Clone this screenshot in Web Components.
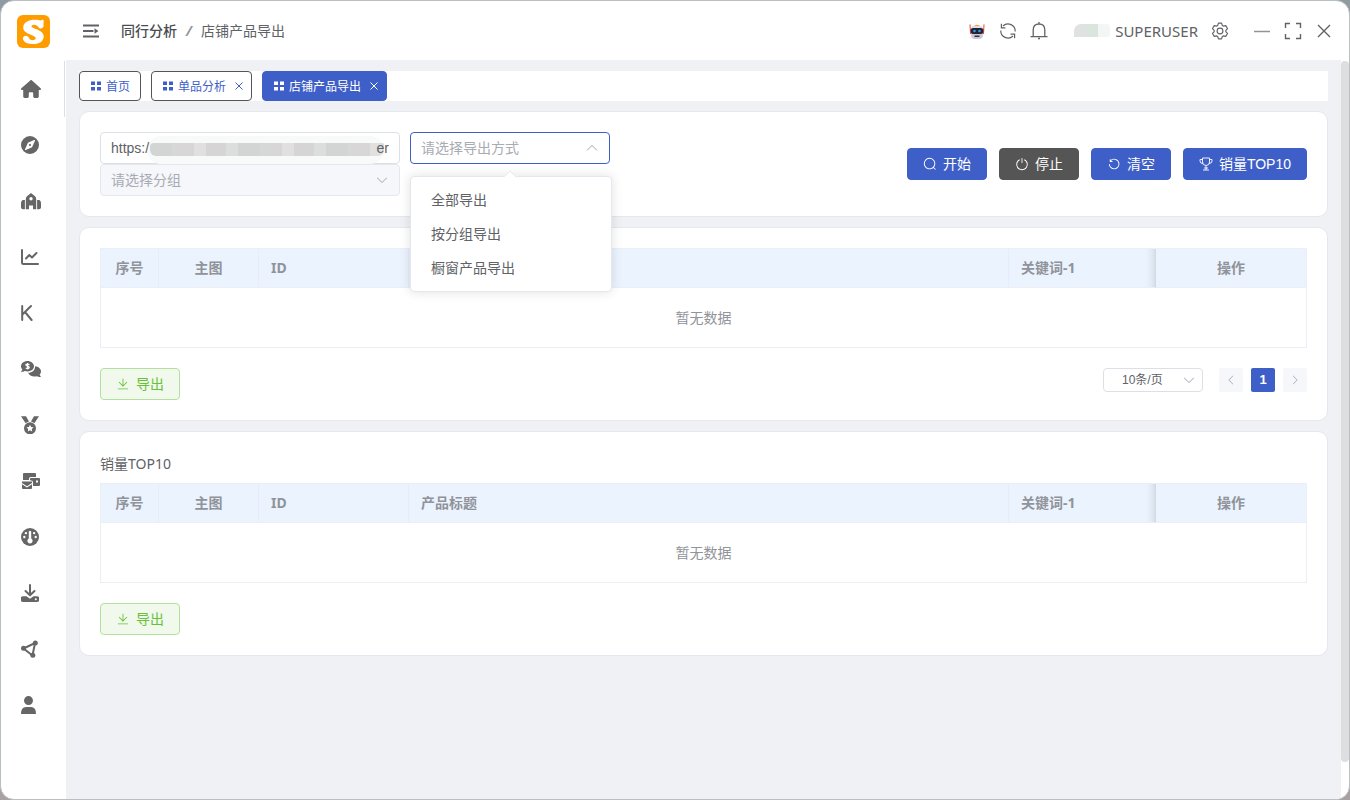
<!DOCTYPE html>
<html lang="zh-CN">
<head>
<meta charset="utf-8">
<title>店铺产品导出</title>
<style>
  html { height: 100%; }
  body {
    margin: 0;
    height: 100%;
    background: linear-gradient(#909ba1, #a9a0a4);
    font-family: "Noto Sans", "Noto Sans CJK SC", sans-serif;
    font-size: 14px;
    line-height: 20px;
    color: #606266;
    --primary: #3f5fc8;
    --line: #e4e7ed;
    --muted: #a8abb2;
    --control: "Liberation Sans", "Noto Sans CJK SC", sans-serif;
  }
</style>
</head>
<body>
<app-window>
  <side-nav slot="side"></side-nav>
  <top-bar slot="top"></top-bar>
  <tab-strip>
    <tab-item>首页</tab-item>
    <tab-item closable>单品分析</tab-item>
    <tab-item closable active>店铺产品导出</tab-item>
  </tab-strip>
  <panel-card>
    <export-form></export-form>
  </panel-card>
  <panel-card>
    <data-table label="产品列表"></data-table>
    <card-footer>
      <ui-button kind="success" icon="download">导出</ui-button>
      <page-pager slot="end"></page-pager>
    </card-footer>
  </panel-card>
  <panel-card>
    <card-title>销量TOP10</card-title>
    <data-table label="销量TOP10" name-column="产品标题"></data-table>
    <card-footer>
      <ui-button kind="success" icon="download">导出</ui-button>
    </card-footer>
  </panel-card>
</app-window>

<script>
const ICONS = {
  home: ['0 0 576 512', '<path d="M575.8 255.5c0 18-15 32.1-32 32.1h-32l.7 160.2c0 2.7-.2 5.4-.5 8.1V472c0 22.1-17.9 40-40 40H392c-22.100 0-40-17.900-40-40V384c0-17.700-14.300-32-32-32H256c-17.700 0-32 14.300-32 32v88c0 22.100-17.900 40-40 40H104c-22.100 0-40-17.900-40-40V287.600H32c-18 0-32-14-32-32.100c0-9 3-17 10-24L266.400 8c7-7 15-8 22-8s15 2 21 7L564.800 231.500c8 7 12 15 11 24z"/>'],
  compass: ['0 0 18 18', '<path fill-rule="evenodd" d="M9 0a9 9 0 1 0 0 18A9 9 0 0 0 9 0zM13.200 4Q14.300 3.700 14 4.800L11.400 10.600Q11.200 11.200 10.600 11.400L4.800 14Q3.700 14.300 4 13.200L6.600 7.400Q6.800 6.800 7.400 6.600zM9 7.900a1.100 1.100 0 1 0 0 2.200 1.100 1.100 0 0 0 0-2.200z"/>'],
  house: ['0 0 20 18', '<path fill-rule="evenodd" d="M10 1 14 4.300Q15.200 5.300 15.200 7V17.300H12V13.500H8V17.300H4.800V7Q4.800 5.300 6 4.300zM10 5a1.700 1.700 0 1 0 0 3.400 1.700 1.700 0 0 0 0-3.400z"/><path d="M3.900 8V17.300H2.100Q0 17.300 0 15.500V11Q0 9 1.600 8zM16.100 8H18.400Q20 9 20 11V15.500Q20 17.300 17.900 17.300H16.100z"/>'],
  chart: ['0 0 18 18', '<path fill="none" stroke="currentColor" stroke-width="2" stroke-linecap="round" stroke-linejoin="round" d="M1 2V14.500Q1 16 2.500 16H17M5 10.500 8.300 7 11 9.500 15.500 5"/>'],
  letterk: ['0 0 12 18', '<path fill="none" stroke="currentColor" stroke-width="2" stroke-linecap="round" stroke-linejoin="round" d="M1.200 2V16M10 2 1.200 10.700M4 8 10.600 16"/>'],
  comments: ['0 0 20 18', '<path d="M6.500 1C2.900 1 0 3.400 0 6.300c0 1.300.5 2.400 1.400 3.300L0 12c1.700 0 3-.4 4-.9.800.3 1.600.4 2.500.4 3.600 0 6.500-2.400 6.500-5.200S10.100 1 6.500 1z"/><path d="M14 6.200c.5 3.700-3 6.700-7 6.600 1 2.300 3.500 3.800 6.500 3.800.9 0 1.700-.1 2.500-.4 1 .5 2.300.9 4 .9l-1.400-2.400c.9-.9 1.400-2.100 1.400-3.400C20 8.600 17.500 6.500 14 6.200z"/><path fill="none" stroke="#fff" stroke-width="1.200" d="M8.400 4.600Q6.500 3.600 5 4.400 4.400 5.600 6.600 6.200 9 6.900 8 8.100 6.700 9 4.700 8M6.600 3V9.500"/>'],
  medal: ['0 0 18 18', '<path d="M0 .3H5L8 5.600Q6 6 4.600 7.300zM18 .3H13L10 5.600Q12 6 13.400 7.300z"/><path fill-rule="evenodd" d="M9 6.300a6 6 0 1 0 0 12 6 6 0 0 0 0-12zM9 8.700l1.100 2.300 2.500.3-1.800 1.700.4 2.500L9 14.300l-2.200 1.200.4-2.500-1.800-1.700 2.500-.3z"/>'],
  mail: ['0 0 20 18', '<path d="M3 1H14Q15 1 15 2V5H9.500Q8 5 8 7V8H2V2Q2 1 3 1z"/><path fill-rule="evenodd" d="M10 6H18Q19 6 19 7V13Q19 14 18 14H12V10Q12 8.500 9 8.300V7Q9 6 10 6zM15 8.500V10.500H17V8.500z"/><path d="M1 9.500H11V11L6 14.300 1 11zM1 12.300 6 15.600 11 12.300V16Q11 17 10 17H2Q1 17 1 16z"/>'],
  gauge: ['0 0 18 18', '<circle cx="9" cy="9" r="9"/><g fill="#fff"><path d="M7.800 3.500Q9 1.800 10.200 3.500V10.500a2.600 2.600 0 1 1-2.400 0z"/><circle cx="4.900" cy="5.100" r="1.200"/><circle cx="3.300" cy="9" r="1.200"/><circle cx="13.100" cy="5.100" r="1.200"/><circle cx="14.700" cy="9" r="1.200"/></g>'],
  inbox: ['0 0 18 18', '<path fill="none" stroke="currentColor" stroke-width="2" stroke-linecap="round" stroke-linejoin="round" d="M9 1V10.500M4.500 7 9 11.300 13.500 7"/><path fill-rule="evenodd" d="M2.200 12.200H5.500L9 14.800 12.500 12.200H15.800A2.600 2.600 0 0 1 15.800 18H2.200A2.600 2.600 0 0 1 2.200 12.200zM14.800 14.200a1 1 0 1 0 0 2 1 1 0 0 0 0-2z"/>'],
  nodes: ['0 0 18 18', '<path fill="none" stroke="currentColor" stroke-width="2" d="M2.500 8.500 14 3 11.500 15.500z"/><circle cx="2.500" cy="8.300" r="2.500"/><circle cx="14.300" cy="3" r="2.500"/><circle cx="11.800" cy="15.300" r="2.500"/>'],
  user: ['0 0 16 18', '<circle cx="7.500" cy="4.600" r="4.500"/><path d="M0 18Q0 11 5 11H10Q15 11 15 18z"/>'],
  fold: ['0 0 16 14', '<path d="M0 .5H16V2.500H0zM0 6H10.500V8H0zM0 11.500H16V13.500H0zM11.500 4.300 15.500 7 11.500 9.700z"/>'],
  robot: ['0 0 18 18', '<path fill="#f5a623" d="M6 4Q9 1.500 12 4z"/><path fill="#e8453c" d="M1.500 2.500H2.600V6.500H4V12H2zM16.500 2.500H15.400V6.500H14V12H16z"/><rect x="3" y="4" width="12" height="13" rx="4" fill="#cfc6dc"/><path fill="#e2dcea" d="M5 4H13L14 7H4z"/><rect x="2.800" y="6" width="12.400" height="6" rx="2.500" fill="#1f2430"/><circle cx="6.500" cy="9" r="1.300" fill="#26a0e8"/><circle cx="11.500" cy="9" r="1.300" fill="#26a0e8"/><rect x="6.500" y="13.500" width="5" height="1.500" fill="#33313a"/>'],
  refresh: ['0 0 18 18', '<g fill="none" stroke="currentColor" stroke-width="1.200"><path d="M4 4A7.200 7.200 0 0 1 16.200 9.500M14 14A7.200 7.200 0 0 1 1.800 8.500M2.400 1.800V5.800H6.400M15.600 16.200V12.200H11.600"/></g>'],
  bell: ['0 0 18 18', '<g fill="none" stroke="currentColor" stroke-width="1.300"><path d="M9 0V2M3.200 14.500V8Q3.200 2 9 2T14.800 8V14.500M.5 14.700H17.500M8 16.500H10"/></g>'],
  gear: ['0 0 1024 1024', '<g fill="none" stroke="currentColor" stroke-width="64"><path d="M600.704 64 645 200 700 232 840 205 938 375 842 480V544L938 649 840 819 700 792 645 824 600 960H424L379 824 324 792 184 819 86 649 182 544V480L86 375 184 205 324 232 379 200 424 64z" stroke-linejoin="round"/><circle cx="512" cy="512" r="165"/></g>'],
  minus: ['0 0 16 16', '<path fill="none" stroke="currentColor" stroke-width="1.300" d="M0 8.500H16"/>'],
  expand: ['0 0 18 18', '<path fill="none" stroke="currentColor" stroke-width="1.400" d="M1.500 6V1.500H6M12 1.500H16.500V6M16.500 12V16.500H12M6 16.500H1.500V12"/>'],
  cross: ['0 0 16 16', '<path fill="none" stroke="currentColor" stroke-width="1.400" d="M2 2 14 14M14 2 2 14"/>'],
  close: ['0 0 10 10', '<path fill="none" stroke="currentColor" d="M1.500 1.500 8.500 8.500M8.500 1.500 1.500 8.500"/>'],
  menu: ['0 0 12 12', '<path d="M1 1.500H5V5H1zM7 1.500H11V5H7zM1 7H5V10.500H1zM7 7H11V10.500H7z"/>'],
  down: ['0 0 1024 1024', '<path d="M831.872 340.864 512 652.672 192.128 340.864a30.592 30.592 0 0 0-42.752 0 29.120 29.120 0 0 0 0 41.600L489.664 714.240a32 32 0 0 0 44.672 0l340.288-331.712a29.120 29.120 0 0 0 0-41.728 30.592 30.592 0 0 0-42.752 0z"/>'],
  search: ['0 0 1024 1024', '<path d="m795.904 750.720 124.992 124.928a32 32 0 0 1-45.248 45.248L750.656 795.904a416 416 0 1 1 45.248-45.248zM480 832a352 352 0 1 0 0-704 352 352 0 0 0 0 704z"/>'],
  power: ['0 0 1024 1024', '<path d="M352 159.872V230.400a352 352 0 1 0 320 0v-70.528A416.128 416.128 0 0 1 512 960a416 416 0 0 1-160-800.128z"/><path d="M512 64q32 0 32 32v320q0 32-32 32t-32-32V96q0-32 32-32z"/>'],
  undo: ['0 0 1024 1024', '<path d="M289.088 296.704h92.992a32 32 0 0 1 0 64H232.960a32 32 0 0 1-32-32V179.712a32 32 0 0 1 64 0v50.560a384 384 0 0 1 643.840 282.880 384 384 0 0 1-383.936 384 384 384 0 0 1-384-384h64a320 320 0 1 0 640 0 320 320 0 0 0-555.712-216.448z"/>'],
  trophy: ['0 0 14 14', '<path fill="none" stroke="currentColor" stroke-width=".9" d="M3.500 1H10.500V5A3.500 3.500 0 0 1 3.500 5zM3.500 2.500H1V4Q1 6.500 4 6.500M10.500 2.500H13V4Q13 6.500 10 6.500M7 8.500V13M4 13H10M5 11H9"/>'],
  download: ['0 0 1024 1024', '<path d="M160 832h704a32 32 0 1 1 0 64H160a32 32 0 1 1 0-64zm384-253.696 236.288-236.352 45.248 45.248L508.800 704 192 387.200l45.248-45.248L480 584.704V128h64v450.304z"/>']
};

const icon = (name, w, h = w) =>
  `<svg viewBox="${ICONS[name][0]}" width="${w}" height="${h}" fill="currentColor" aria-hidden="true">${ICONS[name][1]}</svg>`;

const RESET = `
  *, *::before, *::after { box-sizing: border-box; }
  svg { display: block; flex: none; }
  button, a, select, input { font: inherit; color: inherit; margin: 0; padding: 0; text-decoration: none; }
  button { background: none; border: 0; cursor: pointer; }
`;

const define = (tag, css, html) => customElements.define(tag, class extends HTMLElement {
  connectedCallback() {
    if (this.shadowRoot) return;
    const root = this.attachShadow({ mode: 'open' });
    root.innerHTML = `<style>${RESET}${css}</style>${typeof html === 'function' ? html(this) : html}`;
  }
});

define('app-window', `
  :host { display: grid; grid-template: 59px minmax(0, 1fr) / 65px minmax(0, 1fr); height: 100vh; box-sizing: border-box;
    background: #fff; border: 1px solid #b9bec3; border-radius: 14px; overflow: hidden; }
  .side { grid-row: 1 / 3; }
  .body { display: flex; min-height: 0; }
  main { flex: 1; min-width: 0; display: flex; flex-direction: column; gap: 10px; padding: 11px 13px;
    background: #f0f1f5; overflow-y: auto; scrollbar-width: none; }
  .track { width: 8px; padding-top: 1px; }
  .thumb { height: 95%; border-radius: 4px; background: #dddee0; }
`, `
  <div class="side"><slot name="side"></slot></div>
  <slot name="top"></slot>
  <div class="body"><main><slot></slot></main><div class="track"><div class="thumb"></div></div></div>
`);

const NAV = [['home', 20, '首页'], ['compass', 18, '导航'], ['house', 20, '店铺'], ['chart', 18, '趋势'], ['letterk', 12, '关键词'],
  ['comments', 20, '询盘'], ['medal', 18, '排名'], ['mail', 20, '邮件'], ['gauge', 18, '仪表盘'], ['inbox', 18, '下载'],
  ['nodes', 18, '分发'], ['user', 16, '用户']];

define('side-nav', `
  :host { display: flex; flex-direction: column; color: #666; }
  .logo { height: 60px; padding: 13px 15px; }
  nav { display: flex; flex-direction: column; }
  a { display: flex; align-items: center; height: 56px; padding-left: 20px; border-right: 1px solid transparent; margin-right: 1px; }
  a[aria-current] { border-color: #dcdfe6; }
`, `
  <div class="logo"><svg width="35" height="35" viewBox="0 0 35 35" aria-hidden="true">
    <rect x="1" y="1" width="33" height="33" rx="6" fill="#ff9c00"/>
    <path fill="#fff" d="M27.500 10.500C28.500 14 24 16 22.500 13.200C21.300 10.700 16.500 9.800 15.500 12.200C15 14.500 27.300 15.500 27.700 21.800C28 28.500 21.500 30.500 16 30C10.500 29.700 6.500 27.500 7 24C7.700 21 11.500 20.800 13 24C14.300 27 19 26.800 19.800 24.300C20.300 21 7.300 20.500 7.200 13.800C7 7.500 14.500 5.300 20 5.800C22.500 6 24.500 7 26.500 5.800Q28 5.500 27.700 7.500z"/>
  </svg></div>
  <nav aria-label="主菜单">${NAV.map(([n, w, t], i) =>
    `<a href="#${n}" aria-label="${t}"${i ? '' : ' aria-current="page"'}>${icon(n, w, 18)}</a>`).join('')}</nav>
`);

define('top-bar', `
  :host { display: flex; align-items: center; justify-content: space-between; padding: 0 17px; }
  .group { display: flex; align-items: center; }
  .crumbs { gap: 9px; margin-left: 22px; }
  .crumbs b { font-weight: 500; color: #4a4c50; }
  .crumbs i { color: #909399; font-weight: 700; }
  .tools { gap: 13px; }
  .user { gap: 5px; margin-left: 13px; font-size: 15px; }
  .mask { width: 36px; height: 13px; border-radius: 7px 3px 3px 0; background: linear-gradient(90deg, #e0e1e1 12px, #d9e5dd 12px 24px, #f3f6f4 24px); }
  .win { gap: 14px; margin-left: 12px; }
  .muted { color: #909399; }
`, `
  <div class="group">
    <button aria-label="折叠菜单">${icon('fold', 16, 14)}</button>
    <div class="group crumbs"><b>同行分析</b><i>/</i><span>店铺产品导出</span></div>
  </div>
  <div class="group tools">
    <button aria-label="智能助手">${icon('robot', 18)}</button>
    <button aria-label="刷新">${icon('refresh', 18)}</button>
    <button aria-label="通知">${icon('bell', 18)}</button>
    <div class="group user"><span class="mask"></span><span>SUPERUSER</span></div>
    <button aria-label="设置">${icon('gear', 18)}</button>
    <div class="group win">
      <button class="muted" aria-label="最小化">${icon('minus', 16)}</button>
      <button aria-label="最大化">${icon('expand', 18)}</button>
      <button aria-label="关闭">${icon('cross', 16)}</button>
    </div>
  </div>
`);

define('tab-strip', `:host { display: flex; gap: 10px; flex: none; background: #fff; }`, `<slot></slot>`);

define('tab-item', `
  :host { display: flex; align-items: center; gap: 8px; height: 30px; box-sizing: border-box; padding: 0 10px;
    border: 1px solid #555; border-radius: 4px; background: #fff; color: var(--primary); font-size: 12px; }
  :host([closable]) { padding-right: 7px; }
  :host([active]) { background: var(--primary); border-color: var(--primary); color: #fff; }
  a { display: flex; align-items: center; gap: 4px; }
  a span { padding-top: 2px; }
`, el => `
  <a href="#tab">${icon('menu', 12)}<span><slot></slot></span></a>
  ${el.hasAttribute('closable') ? `<button aria-label="关闭标签">${icon('close', 10)}</button>` : ''}
`);

define('panel-card', `
  :host { display: block; flex: none; padding: 20px; background: #fff; border: 1px solid var(--line); border-radius: 10px; }
`, `<slot></slot>`);

define('card-title', `h2 { margin: 0 0 9px; padding-top: 2px; font-size: 14px; line-height: 20px; font-weight: 400; }
  :host { display: block; }`, `<h2><slot></slot></h2>`);

define('card-footer', `:host { display: flex; justify-content: space-between; align-items: flex-start; margin-top: 20px; }`,
  `<slot></slot><slot name="end"></slot>`);

define('ui-button', `
  :host { display: inline-flex; }
  button { display: flex; align-items: center; gap: 6px; height: 32px; padding: 0 15px; border: 1px solid var(--primary);
    border-radius: 4px; background: var(--primary); color: #fff; font-family: var(--control); white-space: nowrap; }
  :host([kind=dark]) button { background: #555; border-color: #555; }
  :host([kind=success]) button { background: #f0f9eb; border-color: #b3e19d; color: #67c23a; }
`, el => `<button type="button">${icon(el.getAttribute('icon'), 14)}<span><slot></slot></span></button>`);

define('ui-select', `
  :host { display: flex; position: relative; height: 32px; font-family: var(--control); }
  select { appearance: none; flex: 1; min-width: 0; height: 100%; padding: 0 30px 0 10px; border: 1px solid #dcdfe6; border-radius: 4px;
    background: #fff; color: var(--muted); opacity: 1; outline: none; }
  select:disabled { background: #f5f7fa; border-color: var(--line); }
  :host([open]) select { border-color: var(--primary); }
  :host([small]) { height: 24px; font-size: 12px; }
  :host([small]) select { padding-left: 18px; color: #606266; }
  svg { position: absolute; right: 11px; top: 50%; margin-top: -7px; color: var(--muted); pointer-events: none; }
  :host([open]) svg { transform: rotate(180deg); }
  :host([small]) svg { right: 7px; }
`, el => `
  <select aria-label="${el.getAttribute('label')}"${el.hasAttribute('disabled') ? ' disabled' : ''}><option>${el.getAttribute('text')}</option></select>
  ${icon('down', 14)}
`);

define('option-menu', `
  :host { display: block; position: absolute; z-index: 5; left: 0; top: 44px; width: 202px; box-sizing: border-box;
    border: 1px solid var(--line); border-radius: 4px; background: #fff; box-shadow: 0 0 12px rgba(0, 0, 0, .12); }
  .arrow { position: absolute; left: 50%; top: -5px; width: 10px; height: 10px; margin-left: -6px; transform: rotate(45deg);
    background: #fff; border: 1px solid var(--line); border-width: 1px 0 0 1px; border-radius: 2px 0 0; }
  ul { margin: 0; padding: 6px 0; list-style: none; }
  li { height: 34px; line-height: 34px; padding: 0 20px; }
`, `
  <span class="arrow"></span>
  <ul role="listbox" aria-label="导出方式"><li role="option">全部导出</li><li role="option">按分组导出</li><li role="option">橱窗产品导出</li></ul>
`);

define('link-field', `
  :host { display: flex; align-items: center; position: relative; height: 32px; box-sizing: border-box; padding: 0 10px;
    border: 1px solid #dcdfe6; border-radius: 4px; font-family: var(--control); }
  input { flex: 1; min-width: 0; border: 0; outline: 0; background: none; position: relative; }
  .halo { position: absolute; left: 46px; right: 15px; top: 3px; height: 28px; border-radius: 14px; background: #f8f9f9; }
  .mask { position: absolute; left: 49px; right: 15px; top: 10px; height: 13px; border-radius: 4px 2px 6px 6px;
    background: repeating-linear-gradient(90deg, #d3d4d4 0 22px, #d7d7d8 22px 44px, #e0e0e1 44px 56px, #d5d5d6 56px 76px, #dcdddd 76px 88px); }
  .tail { position: relative; }
`, `<span class="halo"></span><span class="mask"></span><input type="text" aria-label="店铺链接" value="https:/"><span class="tail">er</span>`);

define('export-form', `
  :host { display: flex; justify-content: space-between; align-items: center; }
  .fields { display: flex; gap: 10px; }
  .stack { width: 300px; }
  .method { position: relative; width: 200px; }
  .actions { display: flex; gap: 12px; }
`, `
  <div class="fields">
    <div class="stack">
      <link-field></link-field>
      <ui-select label="分组" text="请选择分组" disabled></ui-select>
    </div>
    <div class="method">
      <ui-select label="导出方式" text="请选择导出方式" open></ui-select>
      <option-menu></option-menu>
    </div>
  </div>
  <div class="actions">
    <ui-button icon="search">开始</ui-button>
    <ui-button icon="power" kind="dark">停止</ui-button>
    <ui-button icon="undo">清空</ui-button>
    <ui-button icon="trophy">销量TOP10</ui-button>
  </div>
`);

define('data-table', `
  :host { display: block; }
  table { width: 100%; table-layout: fixed; border-collapse: separate; border-spacing: 0; border: 1px solid #ebeef5; color: #909399; }
  th { height: 39px; padding: 0 12px; background: #ebf3ff; border-right: 1px solid #e6edf8; border-bottom: 1px solid #ebeef5;
    text-align: left; font-weight: 700; }
  th:last-child { border-right: 0; }
  .mid { text-align: center; }
  .edge { background: linear-gradient(270deg, #d6dee8, #e3ebf6 4px, #ebf3ff 9px); border-right-color: #d3dae4; }
  td { height: 59px; padding: 0; text-align: center; background: #fff; }
  .c1 { width: 58px; } .c2 { width: 100px; } .c3 { width: 150px; } .c4 { width: 600px; } .c6 { width: 150px; }
`, el => `
  <table aria-label="${el.getAttribute('label')}">
    <colgroup><col class="c1"><col class="c2"><col class="c3"><col class="c4"><col><col class="c6"></colgroup>
    <thead><tr><th class="mid">序号</th><th class="mid">主图</th><th>ID</th><th>${el.getAttribute('name-column') || ''}</th><th class="edge">关键词-1</th><th class="mid">操作</th></tr></thead>
    <tbody><tr><td colspan="6">暂无数据</td></tr></tbody>
  </table>
`);

define('page-pager', `
  :host { display: flex; gap: 8px; font-family: var(--control); }
  ui-select { width: 100px; margin-right: 8px; }
  button { display: grid; place-items: center; width: 24px; height: 24px; border-radius: 2px; background: #f5f7fa; color: var(--muted); }
  .on { background: var(--primary); color: #fff; font-size: 13px; font-weight: 700; }
  .prev svg { transform: rotate(90deg); }
  .next svg { transform: rotate(-90deg); }
`, `
  <ui-select small label="每页条数" text="10条/页"></ui-select>
  <button class="prev" aria-label="上一页">${icon('down', 12)}</button>
  <button class="on" aria-current="page">1</button>
  <button class="next" aria-label="下一页">${icon('down', 12)}</button>
`);
</script>
</body>
</html>
